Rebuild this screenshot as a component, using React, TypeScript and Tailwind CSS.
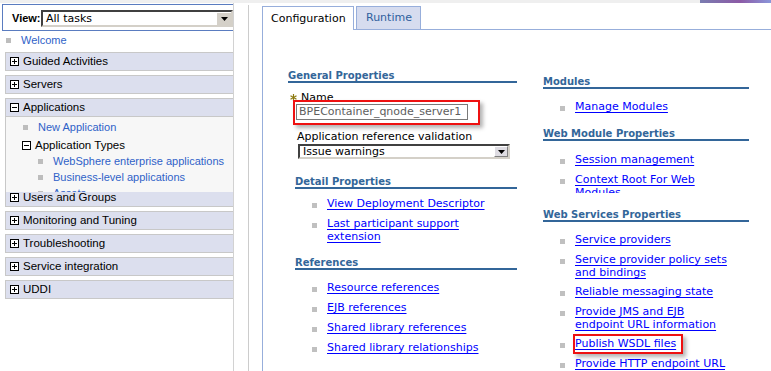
import React from 'react';

const sans = "font-['Liberation_Sans',Arial,sans-serif]";
const dv = "font-['DejaVu_Sans',Verdana,sans-serif]";

function Box({ open }: { open?: boolean }) {
  return (
    <svg width="9" height="9" viewBox="0 0 9 9" className="shrink-0">
      <rect x="0.5" y="0.5" width="8" height="8" fill="#fff" stroke="#000" />
      <line x1="2" y1="4.5" x2="7" y2="4.5" stroke="#000" />
      {!open && <line x1="4.5" y1="2" x2="4.5" y2="7" stroke="#000" />}
    </svg>
  );
}

function NavHeader({ label, open }: { label: string; open?: boolean }) {
  return (
    <div className="flex items-center h-[19px] ml-[5px] border border-r-0 border-[#c8c8c8] bg-[#dcdfee] pl-[4px]">
      <Box open={open} />
      <span className="ml-[4px] text-[11.5px] leading-[13px] text-black whitespace-nowrap">{label}</span>
    </div>
  );
}

function SubLink({ label, indent }: { label: string; indent: 'one' | 'two' }) {
  return (
    <div className="flex items-center h-[16px]">
      <span className={`${indent === 'one' ? 'ml-[17px]' : 'ml-[32px]'} w-[5px] h-[5px] bg-[#bdbdbd] shrink-0`} />
      <span className="ml-[10px] text-[11px] leading-[13px] text-[#2f62c8] whitespace-nowrap">{label}</span>
    </div>
  );
}

function LeftPanel() {
  return (
    <div className={`w-[234px] shrink-0 h-full overflow-hidden border-r border-[#d2d2d2] ${sans}`}>
      <div className="mt-[1px] ml-[2px] h-[27px] flex items-start border-t border-l border-b border-[#5a7cc0]">
        <span className="ml-[9px] mt-[7px] w-[37px] font-bold text-[11px] leading-[13px]">View:</span>
        <div className="mt-[5px] w-[192px] h-[17px] shrink-0 flex border-2 border-t-[#404040] border-l-[#404040] border-r-[#d4d0c8] border-b-[#d4d0c8] bg-white">
          <span className={`flex-1 pl-[3px] text-[11px] leading-[13px] ${dv}`}>All tasks</span>
          <span className="w-[15px] h-full flex items-center justify-center bg-[#d4d0c8] border-t border-l border-white">
            <svg width="7" height="4" viewBox="0 0 7 4">
              <polygon points="0,0 7,0 3.5,4" fill="#000" />
            </svg>
          </span>
        </div>
      </div>

      <div className="mt-[1px] h-[16px] flex items-center">
        <span className="ml-[6px] w-[5px] h-[5px] bg-[#bdbdbd]" />
        <span className="ml-[10px] text-[11px] leading-[13px] text-[#2f62c8]">Welcome</span>
      </div>

      <div className="mt-[4px] flex flex-col gap-[4px]">
        <NavHeader label="Guided Activities" />
        <NavHeader label="Servers" />
        <div className="flex flex-col">
          <NavHeader label="Applications" open />
          <div className="h-[75px] overflow-hidden ml-[5px] border-l border-[#c8c8c8] bg-[#f7f7f7]">
            <div className="mt-[2px]">
              <SubLink label="New Application" indent="one" />
            </div>
            <div className="mt-[2px] flex items-center h-[16px]">
              <span className="ml-[16px]">
                <Box open />
              </span>
              <span className="ml-[4px] text-[11.5px] leading-[13px] text-black">Application Types</span>
            </div>
            <SubLink label="WebSphere enterprise applications" indent="two" />
            <SubLink label="Business-level applications" indent="two" />
            <SubLink label="Assets" indent="two" />
          </div>
          <div className="h-[15px] overflow-hidden">
            <div className="-mt-[4px]">
              <NavHeader label="Users and Groups" />
            </div>
          </div>
        </div>
        <NavHeader label="Monitoring and Tuning" />
        <NavHeader label="Troubleshooting" />
        <NavHeader label="Service integration" />
        <NavHeader label="UDDI" />
      </div>
    </div>
  );
}

function Heading({ text, className = '' }: { text: string; className?: string }) {
  return (
    <div className={`text-[10px] leading-[10px] font-bold text-[#336699] border-b-2 border-[#336699] whitespace-nowrap ${className}`}>
      {text}
    </div>
  );
}

function LinkItem({ text, className = '', marked }: { text: string; className?: string; marked?: boolean }) {
  return (
    <li className={`flex ${className}`}>
      <span className="mt-[6px] ml-[17px] w-[5px] h-[5px] shrink-0 bg-[#c0c0c0]" />
      <div className="ml-[10px] w-[160px] text-[11px] leading-[13px]">
        <span className="relative">
          <a href="#" className="text-[#0000ff] underline underline-offset-[2px]">{text}</a>
          {marked && (
            <span className="absolute -left-[2px] -top-[3px] w-[110px] h-[20px] border-2 border-[#ee1111] shadow-[3px_3px_4px_rgba(0,0,0,0.3)]" />
          )}
        </span>
      </div>
    </li>
  );
}

function Star() {
  return (
    <svg width="7" height="7" viewBox="0 0 7 7" className="mt-[2px] shrink-0">
      <g stroke="#8c7a10" strokeWidth="1.2">
        <line x1="3.5" y1="0" x2="3.5" y2="7" />
        <line x1="0.5" y1="1.8" x2="6.5" y2="5.2" />
        <line x1="0.5" y1="5.2" x2="6.5" y2="1.8" />
      </g>
    </svg>
  );
}

function Content() {
  return (
    <div className={`flex-1 flex flex-col ${dv} text-black`}>
      <div className="mt-[3px] h-[24px] flex shrink-0">
        <div className="w-[92px] border-t border-l border-r border-[#97aedb] bg-white pl-[8px] pt-[5px] text-[11px] leading-[13px]">
          Configuration
        </div>
        <div className="w-[2px] border-b border-[#97aedb]" />
        <div className="w-[65px] border border-[#97aedb] bg-[#d6dcef] pl-[9px] pt-[4px] text-[11px] leading-[13px] text-[#2f5f9e]">
          Runtime
        </div>
        <div className="flex-1 border-b border-[#97aedb]" />
      </div>

      <div className="flex-1 border-l border-[#97aedb] flex">
        <div className="ml-[25px] w-[229px] shrink-0 flex flex-col">
          <Heading text="General Properties" className="mt-[41px]" />
          <div className="relative mt-[9px]">
            <div className="flex h-[12px] items-start pl-[2px]">
              <Star />
              <span className="ml-[4px] text-[11px] leading-[12px]">Name</span>
            </div>
            <div className="ml-[8px] w-[172px] h-[16px] border border-[#7a7a7a] bg-white pl-[2px] text-[11px] leading-[14px] text-[#5e5e5e]">
              BPEContainer_qnode_server1
            </div>
            <span className="absolute left-[5px] top-[8px] w-[187px] h-[25px] border-2 border-[#ee1111] shadow-[3px_3px_4px_rgba(0,0,0,0.3)]" />
          </div>
          <div className="ml-[9px] mt-[10px] text-[11px] leading-[13px] whitespace-nowrap">Application reference validation</div>
          <div className="ml-[10px] mt-[1px] w-[212px] h-[15px] flex border-2 border-t-[#404040] border-l-[#404040] border-r-[#d4d0c8] border-b-[#d4d0c8] bg-white">
            <span className="flex-1 pl-[3px] text-[11px] leading-[12px]">Issue warnings</span>
            <span className="w-[14px] h-full flex items-center justify-center bg-[#dedce2] border-t border-l border-white border-r border-b border-r-[#808080] border-b-[#808080]">
              <svg width="7" height="4" viewBox="0 0 7 4">
                <polygon points="0,0 7,0 3.5,4" fill="#000" />
              </svg>
            </span>
          </div>

          <div className="ml-[7px]">
            <Heading text="Detail Properties" className="mt-[18px]" />
            <ul className="mt-[8px] flex flex-col">
              <LinkItem text="View Deployment Descriptor" />
              <LinkItem text="Last participant support extension" className="mt-[7px]" />
            </ul>
            <Heading text="References" className="mt-[15px]" />
            <ul className="mt-[11px] flex flex-col">
              <LinkItem text="Resource references" />
              <LinkItem text="EJB references" className="mt-[7px]" />
              <LinkItem text="Shared library references" className="mt-[7px]" />
              <LinkItem text="Shared library relationships" className="mt-[7px]" />
            </ul>
          </div>
        </div>

        <div className="ml-[26px] w-[206px] shrink-0 flex flex-col">
          <Heading text="Modules" className="mt-[47px]" />
          <ul className="mt-[11px] flex flex-col">
            <LinkItem text="Manage Modules" />
          </ul>
          <Heading text="Web Module Properties" className="mt-[16px]" />
          <ul className="mt-[12px] flex flex-col">
            <LinkItem text="Session management" />
            <div className="mt-[7px] h-[20px] overflow-hidden">
              <LinkItem text="Context Root For Web Modules" />
            </div>
          </ul>
          <Heading text="Web Services Properties" className="mt-[17px]" />
          <ul className="mt-[11px] flex flex-col">
            <LinkItem text="Service providers" />
            <LinkItem text="Service provider policy sets and bindings" className="mt-[7px]" />
            <LinkItem text="Reliable messaging state" className="mt-[6px]" />
            <LinkItem text="Provide JMS and EJB endpoint URL information" className="mt-[7px]" />
            <LinkItem text="Publish WSDL files" className="mt-[6px]" marked />
            <LinkItem text="Provide HTTP endpoint URL" className="mt-[7px]" />
          </ul>
        </div>
      </div>
    </div>
  );
}

export default function App() {
  return (
    <div className="w-[771px] h-[371px] overflow-hidden bg-white flex flex-col">
      <div className="h-[3px] shrink-0 bg-[linear-gradient(to_right,#efefef_700px,#7a7cb0_700px,#8c5aa6_740px,#8a96da)]" />
      <div className="flex flex-1 min-h-0">
        <LeftPanel />
        <div className="w-[14px] shrink-0" />
        <div className="w-px shrink-0 bg-[#cccccc] mt-[2px]" />
        <div className="w-[13px] shrink-0" />
        <Content />
      </div>
    </div>
  );
}
